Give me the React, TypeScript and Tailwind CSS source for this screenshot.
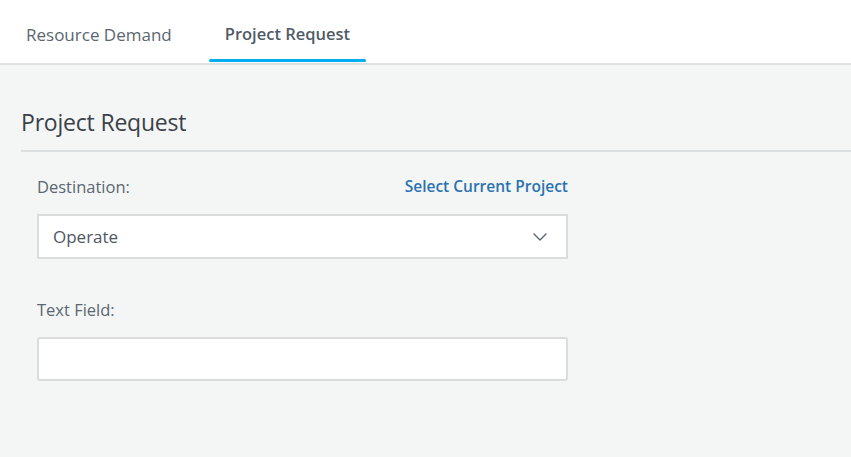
import React from 'react';
import { ChevronDown } from 'lucide-react';

const tabs = ['Resource Demand', 'Project Request'];

const Tab = ({ label, active }: { label: string; active: boolean }) => (
  <div className="relative h-full px-4 pt-[6px] flex items-center">
    <span className={active ? 'text-[16.5px] font-semibold text-[#4f5b66]' : 'text-[17px] text-[#5b6670]'}>{label}</span>
    {active && <div className="absolute left-0 right-0 bottom-[1px] h-[3px] rounded-full bg-[#00aeef]" />}
  </div>
);

const Field = ({ label, children, action }: { label: string; children: React.ReactNode; action?: string }) => (
  <div className="w-[531px]">
    <div className="flex items-center justify-between h-[22px]">
      <span className="text-[16.5px] text-[#5b6670]">{label}</span>
      {action && <a className="text-[15.5px] font-semibold text-[#2a72b0] cursor-pointer">{action}</a>}
    </div>
    <div className="mt-[16px]">{children}</div>
  </div>
);

export default function App() {
  return (
    <div className="w-[851px] h-[457px] bg-[#f4f6f6] overflow-hidden" style={{ fontFamily: '"Open Sans", "Noto Sans", sans-serif' }}>
      <div className="h-[65px] bg-white border-b-2 border-[#dddfe0] flex items-stretch pl-[10px] gap-[21px]">
        {tabs.map((t, i) => (
          <Tab key={t} label={t} active={i === 1} />
        ))}
      </div>

      <div className="pl-[21px]">
        <h1 className="mt-[41px] text-[23px] leading-[32px] text-[#3b4148] tracking-[-0.2px]">Project Request</h1>
        <div className="mt-[12px] h-[2px] bg-[#dcdfe0]" />

        <div className="pl-[16px] pt-[24px] flex flex-col gap-[40px]">
          <Field label="Destination:" action="Select Current Project">
            <div className="h-[45px] bg-white border-2 border-[#dcdcdc] flex items-center justify-between pl-[14px] pr-[14px]">
              <span className="text-[17px] text-[#4e5862]">Operate</span>
              <ChevronDown size={24} strokeWidth={1.4} className="text-[#5b6670]" />
            </div>
          </Field>
          <Field label="Text Field:">
            <input className="block w-full h-[44px] bg-white border-2 border-[#dcdcdc] rounded-[3px] outline-none px-3 text-[15px]" />
          </Field>
        </div>
      </div>
    </div>
  );
}
